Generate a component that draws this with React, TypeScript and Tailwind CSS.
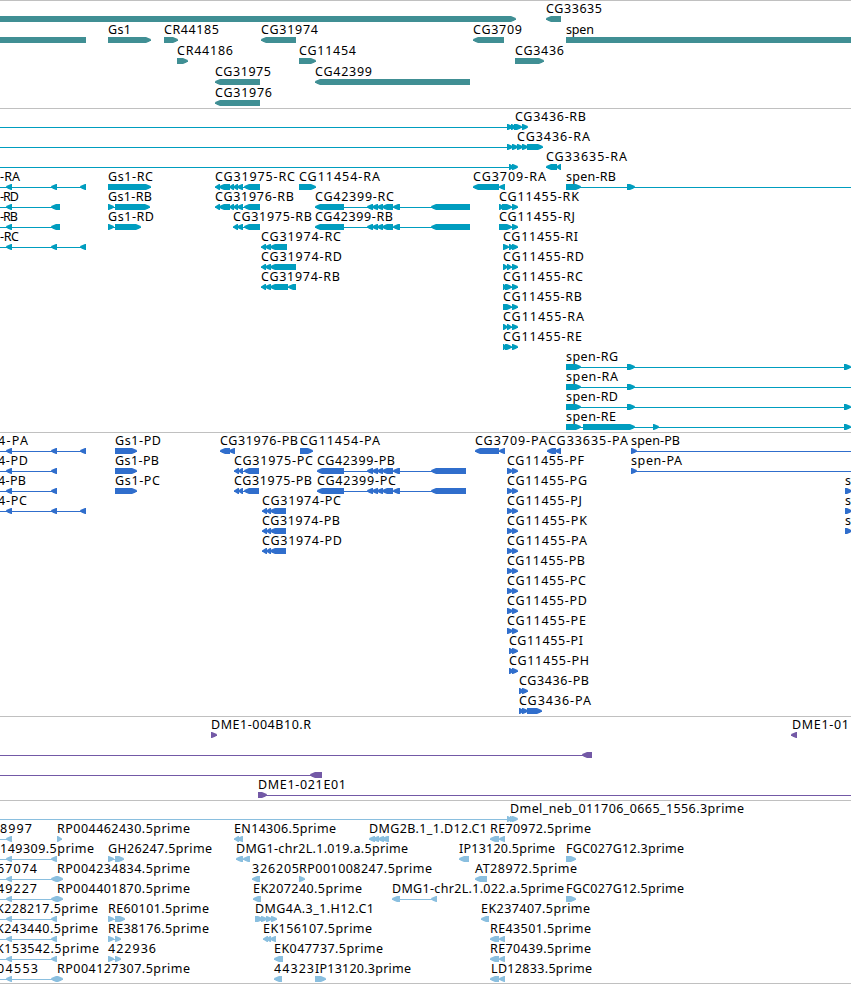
type Dir = "l" | "r";
type Span = [number, number];

interface Feature {
  dir: Dir;
  spans: Span[];
  // text, left edge, right edge
  label?: [string, number, number];
  // intron line, drawn over the spans' extent when left out
  line?: Span;
}

interface TrackProps {
  name: string;
  rows: Feature[][];
  height: number;
  top: number;
  pitch?: number;
  className: string;
}

const HEAD = 5;
const WIDTH = 851;
const OFF = 870;

const f = (
  dir: Dir,
  spans: Span[],
  label?: [string, number, number],
  line?: Span
): Feature => ({ dir, spans, label, line });

const genes: Feature[][] = [
  [f("r", [[-20, 516]]), f("l", [[546, 561]], ["CG33635", 546, 602])],
  [
    f("l", [[-20, 86]]),
    f("r", [[108, 151]], ["Gs1", 108, 131]),
    f("r", [[164, 178]], ["CR44185", 164, 219]),
    f("l", [[261, 296]], ["CG31974", 261, 318]),
    f("l", [[473, 504]], ["CG3709", 473, 522]),
    f("r", [[566, OFF]], ["spen", 566, 594]),
  ],
  [
    f("r", [[177, 188]], ["CR44186", 177, 233]),
    f("r", [[299, 316]], ["CG11454", 299, 356]),
    f("r", [[515, 544]], ["CG3436", 515, 564]),
  ],
  [
    f("l", [[215, 260]], ["CG31975", 215, 271]),
    f("l", [[315, 470]], ["CG42399", 315, 372]),
  ],
  [f("l", [[215, 260]], ["CG31976", 215, 272])],
];

const leftLong: Span[] = [[6, 12], [51, 57], [80, 86]];
const leftShort: Span[] = [[6, 12], [51, 60]];
const rc31975: Span[] = [[215, 220], [219, 230], [229, 234], [233, 238], [237, 243], [244, 260]];
const r42399: Span[] = [[315, 344], [367, 373], [372, 378], [377, 383], [382, 393], [393, 400], [431, 470]];
const r11455: Span[] = [[503, 508], [507, 512], [512, 518]];

const transcripts: Feature[][] = [
  [f("r", [[507, 513], [511, 516], [514, 522], [522, 528]], ["CG3436-RB", 515, 586], [-5, 527])],
  [f("r", [[507, 513], [512, 518], [517, 523], [522, 528], [527, 543]], ["CG3436-RA", 517, 590], [-5, 543])],
  [
    f("r", [[509, 514], [512, 518]], undefined, [-5, 517]),
    f("l", [[546, 557], [556, 561]], ["CG33635-RA", 546, 627]),
  ],
  [
    f("l", leftLong, ["-RA", 0, 20], [-5, 86]),
    f("r", [[108, 151]], ["Gs1-RC", 108, 153]),
    f("l", rc31975, ["CG31975-RC", 215, 295]),
    f("r", [[299, 316]], ["CG11454-RA", 299, 380]),
    f("l", [[473, 499], [499, 505]], ["CG3709-RA", 473, 546]),
    f("r", [[566, 581], [627, 635]], ["spen-RB", 566, 616], [566, OFF]),
  ],
  [
    f("l", leftShort, ["-RD", 0, 19], [-5, 60]),
    f("r", [[108, 114], [115, 150]], ["Gs1-RB", 108, 152]),
    f("l", rc31975, ["CG31976-RB", 215, 294]),
    f("l", r42399, ["CG42399-RC", 315, 394]),
    f("r", [[499, 504], [502, 512], [512, 518]], ["CG11455-RK", 499, 579]),
  ],
  [
    f("l", leftShort, ["-RB", 0, 18], [-5, 60]),
    f("r", [[108, 114], [115, 141]], ["Gs1-RD", 108, 154]),
    f("l", [[233, 238], [237, 243], [244, 260]], ["CG31975-RB", 233, 312]),
    f("l", r42399, ["CG42399-RB", 315, 393]),
    f("r", [[499, 512], [512, 518]], ["CG11455-RJ", 499, 575]),
  ],
  [
    f("l", leftLong, ["-RC", 0, 19], [-5, 86]),
    f("l", [[261, 266], [265, 271], [270, 287]], ["CG31974-RC", 261, 341]),
    f("r", [[503, 509], [509, 514], [512, 518]], ["CG11455-RI", 503, 578]),
  ],
  [
    f("l", [[261, 266], [265, 271], [270, 296]], ["CG31974-RD", 261, 342]),
    f("r", r11455, ["CG11455-RD", 503, 584]),
  ],
  [
    f("l", [[261, 266], [265, 271], [270, 288], [288, 296]], ["CG31974-RB", 261, 340]),
    f("r", [[503, 507], [505, 512], [512, 518]], ["CG11455-RC", 503, 583]),
  ],
  [f("r", [[503, 512], [512, 518]], ["CG11455-RB", 503, 582])],
  [f("r", r11455, ["CG11455-RA", 503, 584])],
  [f("r", [[503, 507], [505, 512], [512, 518]], ["CG11455-RE", 503, 582])],
  [f("r", [[566, 581], [627, 635], [844, 851]], ["spen-RG", 566, 618], [566, OFF])],
  [f("r", [[566, 581], [627, 635]], ["spen-RA", 566, 618], [566, OFF])],
  [f("r", [[566, 581], [627, 635], [844, 851]], ["spen-RD", 566, 618], [566, OFF])],
  [f("r", [[566, 581], [583, 635], [653, 659], [844, 851]], ["spen-RE", 566, 616], [566, OFF])],
];

const p42399: Span[] = [[317, 344], [367, 373], [372, 378], [377, 383], [382, 393], [393, 400], [431, 466]];
const p31975: Span[] = [[234, 239], [238, 243], [244, 259]];
const p31974: Span[] = [[262, 267], [266, 271], [270, 286]];
const p11455: Span[] = [[507, 513], [512, 518]];
const p11455s: Span[] = [[509, 514], [512, 518]];

const proteins: Feature[][] = [
  [
    f("l", leftLong, ["4-PA", -2, 28], [-5, 86]),
    f("r", [[115, 137]], ["Gs1-PD", 115, 161]),
    f("l", [[220, 230], [229, 235]], ["CG31976-PB", 220, 298]),
    f("r", [[300, 313]], ["CG11454-PA", 300, 380]),
    f("l", [[475, 499], [499, 505]], ["CG3709-PA", 475, 547]),
    f("l", [[547, 556], [555, 561]], ["CG33635-PA", 548, 628]),
    f("r", [[631, 637]], ["spen-PB", 631, 680], [631, OFF]),
  ],
  [
    f("l", [[6, 12], [51, 57]], ["4-PD", -2, 28], [-5, 57]),
    f("r", [[115, 137]], ["Gs1-PB", 115, 159]),
    f("l", p31975, ["CG31975-PC", 234, 313]),
    f("l", p42399, ["CG42399-PB", 317, 395]),
    f("r", p11455, ["CG11455-PF", 507, 584]),
    f("r", [[631, 637]], ["spen-PA", 631, 682], [631, OFF]),
  ],
  [
    f("l", [[6, 12], [51, 57]], ["4-PB", -2, 26], [-5, 57]),
    f("r", [[115, 137]], ["Gs1-PC", 115, 160]),
    f("l", p31975, ["CG31975-PB", 234, 312]),
    f("l", p42399, ["CG42399-PC", 317, 396]),
    f("r", p11455, ["CG11455-PG", 507, 587]),
    f("r", [[845, 852]], ["s", 845, 851]),
  ],
  [
    f("l", leftLong, ["4-PC", -2, 27], [-5, 86]),
    f("l", p31974, ["CG31974-PC", 262, 341]),
    f("r", p11455, ["CG11455-PJ", 507, 582]),
    f("r", [[845, 852]], ["s", 845, 851]),
  ],
  [
    f("l", p31974, ["CG31974-PB", 262, 340]),
    f("r", p11455, ["CG11455-PK", 507, 587]),
    f("r", [[845, 852]], ["s", 845, 851]),
  ],
  [
    f("l", p31974, ["CG31974-PD", 262, 342]),
    f("r", p11455, ["CG11455-PA", 507, 587]),
  ],
  [f("r", p11455, ["CG11455-PB", 507, 585])],
  [f("r", p11455, ["CG11455-PC", 507, 586])],
  [f("r", p11455, ["CG11455-PD", 507, 587])],
  [f("r", p11455, ["CG11455-PE", 507, 586])],
  [f("r", p11455s, ["CG11455-PI", 509, 583])],
  [f("r", p11455s, ["CG11455-PH", 509, 589])],
  [f("r", [[519, 524], [522, 528]], ["CG3436-PB", 519, 589])],
  [f("r", [[519, 524], [522, 528], [527, 542]], ["CG3436-PA", 519, 591])],
];

const clones: Feature[][] = [
  [
    f("r", [[211, 217]], ["DME1-004B10.R", 211, 311]),
    f("l", [[791, 797]], ["DME1-01", 792, 849]),
  ],
  [f("l", [[582, 592]], undefined, [-5, 592])],
  [f("l", [[310, 322]], undefined, [-5, 322])],
  [f("r", [[258, 267]], ["DME1-021E01", 258, 346], [258, OFF])],
];

const pair: Span[] = [[6, 12], [51, 57]];
const re: Span[] = [[490, 499], [499, 505]];

const ests: Feature[][] = [
  [f("r", [[507, 512], [510, 515], [512, 518]], ["Dmel_neb_011706_0665_1556.3prime", 510, 744], [-5, 517])],
  [
    f("l", [[6, 12]], ["8997", 0, 32], [-5, 12]),
    f("r", [[57, 62]], ["RP004462430.5prime", 57, 190]),
    f("l", [[234, 239], [237, 243]], ["EN14306.5prime", 234, 336]),
    f("l", [[369, 375], [373, 379], [378, 384], [382, 389]], ["DMG2B.1_1.D12.C1", 369, 487]),
    f("l", re, ["RE70972.5prime", 490, 591]),
  ],
  [
    f("l", pair, ["149309.5prime", 0, 94], [-5, 57]),
    f("r", [[108, 114], [115, 124]], ["GH26247.5prime", 108, 212]),
    f("l", [[236, 243], [243, 250]], ["DMG1-chr2L.1.019.a.5prime", 236, 408]),
    f("l", [[459, 469]], ["IP13120.5prime", 459, 555]),
    f("r", [[566, 576]], ["FGC027G12.3prime", 566, 684]),
  ],
  [
    f("l", pair, ["67074", -3, 37], [-5, 57]),
    f("r", [[56, 63]], ["RP004234834.5prime", 57, 190]),
    f("l", [[252, 260]], ["326205", 252, 299]),
    f("r", [[299, 305]], ["RP001008247.5prime", 299, 432]),
    f("l", [[475, 487]], ["AT28972.5prime", 475, 577]),
  ],
  [
    f("l", pair, ["49227", -3, 37], [-5, 57]),
    f("r", [[56, 63]], ["RP004401870.5prime", 57, 190]),
    f("l", [[253, 261]], ["EK207240.5prime", 253, 362]),
    f("l", [[392, 400], [431, 437]], ["DMG1-chr2L.1.022.a.5prime", 392, 564]),
    f("r", [[566, 576]], ["FGC027G12.5prime", 566, 684]),
  ],
  [
    f("l", pair, ["K228217.5prime", -4, 98], [-5, 57]),
    f("r", [[108, 114], [115, 125]], ["RE60101.5prime", 108, 209]),
    f("r", [[255, 263], [261, 267], [266, 272], [271, 277]], ["DMG4A.3_1.H12.C1", 255, 374]),
    f("l", [[481, 489]], ["EK237407.5prime", 481, 590]),
  ],
  [
    f("l", pair, ["K243440.5prime", -4, 98], [-5, 57]),
    f("r", [[108, 114], [115, 121]], ["RE38176.5prime", 108, 209]),
    f("l", [[263, 268], [266, 271], [270, 276]], ["EK156107.5prime", 263, 372]),
    f("l", re, ["RE43501.5prime", 490, 591]),
  ],
  [
    f("l", pair, ["K153542.5prime", -4, 99], [-5, 57]),
    f("r", [[108, 114], [115, 121]], ["422936", 108, 156]),
    f("l", [[274, 283]], ["EK047737.5prime", 274, 383]),
    f("l", re, ["RE70439.5prime", 490, 591]),
  ],
  [
    f("l", pair, ["04553", -3, 38], [-5, 57]),
    f("r", [[56, 63]], ["RP004127307.5prime", 57, 190]),
    f("l", [[274, 282]], ["44323", 274, 314]),
    f("r", [[315, 326]], ["IP13120.3prime", 315, 411]),
    f("l", re, ["LD12833.5prime", 491, 592]),
  ],
];

// Exon box with a rounded-off head on its leading end.
const arrow = (dir: Dir, [a, b]: Span, y: number) => {
  const head = Math.min(HEAD, b - a - 1);
  const s = dir === "r" ? -1 : 1;
  const tip = dir === "r" ? b : a;
  const tail = dir === "r" ? a : b;
  return `M${tail} ${y}H${tip + s * head}L${tip + s * 2} ${y + 1.3}L${tip} ${y + 2.5}V${y + 3.5}L${tip + s * 2} ${y + 4.7}L${tip + s * head} ${y + 6}H${tail}Z`;
};

const Glyph = ({ feature, y }: { feature: Feature; y: number }) => {
  const { dir, spans, label, line } = feature;
  const [from, to] = line ?? [spans[0][0], spans[spans.length - 1][1]];
  return (
    <g>
      <rect x={from} y={y + 3} width={to - from} height={1} />
      {spans.map((span) => (
        <path key={span[0]} d={arrow(dir, span, y)} />
      ))}
      {label && (
        <text
          x={label[1]}
          y={y - 3}
          textLength={label[2] - label[1]}
          className="fill-black"
        >
          {label[0]}
        </text>
      )}
    </g>
  );
};

const Track = ({ name, rows, height, top, pitch = 20, className }: TrackProps) => (
  <section aria-label={name} className="border-t border-[#c0c0c0]">
    <svg width={WIDTH} height={height} className={`block ${className}`}>
      {rows.map((row, i) =>
        row.map((feature, j) => (
          <Glyph key={`${i}-${j}`} feature={feature} y={top + i * pitch} />
        ))
      )}
    </svg>
  </section>
);

const App = () => {
  return (
    <main className="flex w-[851px] flex-col overflow-hidden border-b border-[#c0c0c0] bg-white font-['Noto_Sans',sans-serif] text-[12.5px]">
      <Track name="Genes" rows={genes} height={107} top={15} pitch={21} className="fill-[#408f94]" />
      <Track name="Transcripts" rows={transcripts} height={323} top={15} className="fill-[#009dbf]" />
      <Track name="Proteins" rows={proteins} height={283} top={15} className="fill-[#306ecc]" />
      <Track name="Clones" rows={clones} height={83} top={15} className="fill-[#7359a6]" />
      <Track name="ESTs" rows={ests} height={182} top={15} className="fill-[#8abfdf]" />
    </main>
  );
};

export default App;
